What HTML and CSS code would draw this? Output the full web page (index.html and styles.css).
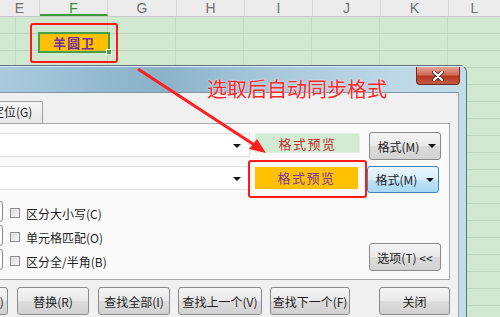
FILE: index.html
```html
<!DOCTYPE html>
<html lang="zh-CN">
<head>
    <meta charset="UTF-8">
    <title>查找和替换</title>
    <link rel="stylesheet" href="styles.css">
</head>
<body>
    <div class="screen">
        <div class="sheet">
            <div class="colhead">
                <div class="ch">E</div>
                <div class="ch active">F</div>
                <div class="ch">G</div>
                <div class="ch">H</div>
                <div class="ch">I</div>
                <div class="ch">J</div>
                <div class="ch">K</div>
                <div class="ch">L</div>
            </div>
            <div class="grid">
                <div class="row"></div>
                <div class="row">
                    <div class="cell"></div>
                    <div class="cell selected">羊圆卫<span class="handle"></span></div>
                </div>
            </div>
        </div>

        <!-- 查找和替换对话框 -->
        <div class="dialog">
            <div class="titlebar">
                <div class="close">
                    <svg width="14" height="10" viewBox="0 0 14 10">
                        <path d="M3 1 L11 9 M11 1 L3 9" stroke="#4a3a36" stroke-width="4" stroke-linecap="round"/>
                        <path d="M3 1 L11 9 M11 1 L3 9" stroke="#fff" stroke-width="2" stroke-linecap="round"/>
                    </svg>
                </div>
            </div>
            <div class="dbody">
                <div class="tabs">
                    <div class="tab">定位(G)</div>
                </div>
                <div class="panel">
                    <div class="frow">
                        <div class="combo"><span class="caret"></span></div>
                        <div class="preview plain">格式预览</div>
                        <div class="btn fmt">格式(M)<span class="caret"></span></div>
                    </div>
                    <div class="frow">
                        <div class="combo"><span class="caret"></span></div>
                        <div class="preview filled">格式预览</div>
                        <div class="btn fmt focus">格式(M)<span class="caret"></span></div>
                    </div>
                    <div class="opts">
                        <div class="selects">
                            <div class="edge"></div>
                            <div class="edge"></div>
                            <div class="edge"></div>
                        </div>
                        <div class="checks">
                            <label class="chk"><span class="box"></span>区分大小写(C)</label>
                            <label class="chk"><span class="box"></span>单元格匹配(O)</label>
                            <label class="chk"><span class="box"></span>区分全/半角(B)</label>
                        </div>
                        <div class="btn optbtn">选项(T) &lt;&lt;</div>
                    </div>
                </div>
                <div class="actions">
                    <div class="btn act first">全部替换(A)</div>
                    <div class="btn act">替换(R)</div>
                    <div class="btn act">查找全部(I)</div>
                    <div class="btn act wide">查找上一个(V)</div>
                    <div class="btn act mid">查找下一个(F)</div>
                    <div class="btn act close-btn">关闭</div>
                </div>
            </div>
        </div>

        <!-- 标注 -->
        <div class="mark mark-cell"></div>
        <div class="mark mark-preview"></div>
        <div class="note">选取后自动同步格式</div>
        <svg class="arrow" width="500" height="317" viewBox="0 0 500 317">
            <line x1="138" y1="69" x2="256" y2="146" stroke="#ff1f1f" stroke-width="3"/>
            <polygon points="266,153 249,149 257,139" fill="#ff1f1f"/>
        </svg>
    </div>
</body>
</html>
```

FILE: styles.css
```css
* {
    margin: 0;
    padding: 0;
    box-sizing: border-box;
}

body {
    font-family: "Noto Sans CJK SC", "Liberation Sans", sans-serif;
    background: #cfe8cf;
    overflow: hidden;
}

.screen {
    position: relative;
    width: 500px;
    height: 317px;
    overflow: hidden;
}

/* 表格 */
.sheet {
    display: flex;
    flex-direction: column;
    height: 100%;
}

.colhead {
    display: flex;
    height: 17px;
    background: #ececec;
    border-bottom: 1px solid #c8c8c8;
}

.ch {
    width: 68px;
    border-right: 1px solid #d4d4d4;
    text-align: center;
    font-family: "Liberation Sans", sans-serif;
    font-size: 14px;
    line-height: 16px;
    color: #707070;
}

.ch:first-child {
    width: 40px;
}

.ch:nth-child(3) {
    width: 69px;
}

.ch:last-child {
    width: 51px;
    border-right: none;
}

.ch.active {
    color: #3c8c3c;
    border-bottom: 2px solid #3c9a3c;
}

.grid {
    flex: 1;
    background-color: #cfe8cf;
    background-image:
        repeating-linear-gradient(to bottom, transparent 0 16px, #bcd7bc 16px 17px),
        repeating-linear-gradient(to right, transparent 0 67px, #c2dbc2 67px 68px);
    background-position: 0 0, 40px 0;
}

.row {
    display: flex;
    height: 17px;
}

.cell {
    width: 40px;
}

.cell.selected {
    position: relative;
    width: 68px;
    height: 17px;
    background: #ffc000;
    box-shadow: 0 0 0 2px #47a047;
    color: #7030a0;
    font-size: 13px;
    font-weight: bold;
    line-height: 17px;
    text-align: center;
    letter-spacing: 1px;
}

.handle {
    position: absolute;
    right: -4px;
    bottom: -4px;
    width: 6px;
    height: 6px;
    background: #47a047;
    border: 1px solid #fff;
}

/* 对话框 */
.dialog {
    position: absolute;
    left: -40px;
    top: 65px;
    width: 507px;
    height: 270px;
    display: flex;
    flex-direction: column;
    border-top: 1px solid #5e7280;
    border-right: 1px solid #5e7280;
    border-radius: 0 7px 0 0;
    background: linear-gradient(to right, #b4d2e3, #92b8ce 30%, #8bb2c9 40%, #a6c7da 60%, #bcd7e5 85%, #c4dce8);
}

.titlebar {
    height: 26px;
    display: flex;
    justify-content: flex-end;
    padding-right: 6px;
    border-top: 1px solid #dbe9f1;
}

.close {
    width: 44px;
    height: 18px;
    display: flex;
    align-items: center;
    justify-content: center;
    border: 1px solid #6b2e24;
    border-top: none;
    border-radius: 0 0 4px 4px;
    background: linear-gradient(to bottom, #e6a697, #d06a55 45%, #b8371f 55%, #c65a42);
}

.dbody {
    flex: 1;
    margin-right: 7px;
    background: #f0f0f0;
    border-top: 1px solid #7d97a8;
    border-right: 1px solid #8fa9b9;
}

.tabs {
    display: flex;
    padding-top: 8px;
    padding-left: 21px;
}

.tab {
    width: 62px;
    height: 22px;
    padding-left: 10px;
    border: 1px solid #a0a0a0;
    border-bottom: none;
    border-radius: 2px 2px 0 0;
    background: linear-gradient(to bottom, #f6f6f6, #e6e6e6);
    font-size: 12px;
    line-height: 20px;
    color: #1e1e1e;
}

.panel {
    margin-left: 10px;
    margin-right: 8px;
    padding: 9px 8px 6px 9px;
    background: #fafafa;
    border: 1px solid #a8a8a8;
}

.frow {
    display: flex;
    align-items: flex-start;
    height: 33px;
}

.frow + .frow {
    height: 28px;
}

.combo {
    position: relative;
    width: 270px;
    height: 24px;
    background: #fff;
    border: 1px solid #e0e0e0;
}

.caret {
    display: inline-block;
    width: 0;
    height: 0;
    border-left: 4px solid transparent;
    border-right: 4px solid transparent;
    border-top: 4px solid #111;
}

.combo .caret {
    position: absolute;
    right: 8px;
    top: 10px;
}

.preview {
    margin-left: 5px;
    width: 105px;
    height: 20px;
    font-size: 13px;
    line-height: 19px;
    text-align: center;
    letter-spacing: 1.5px;
}

.preview.plain {
    background: #d3ead3;
    border: 1px solid #e2efe2;
    color: #c0302b;
}

.preview.filled {
    margin-top: 1px;
    width: 103px;
    height: 22px;
    line-height: 21px;
    background: #ffc000;
    color: #7a3aa0;
}

.btn {
    display: flex;
    align-items: center;
    justify-content: center;
    height: 28px;
    border: 1px solid #8a8a8a;
    border-radius: 3px;
    background: linear-gradient(to bottom, #f4f4f4, #e9e9e9 50%, #dcdcdc 51%, #d2d2d2);
    font-size: 12px;
    color: #1e1e1e;
}

.fmt {
    width: 72px;
    margin-left: 9px;
    margin-top: -1px;
    gap: 9px;
    padding-left: 4px;
}

.fmt.focus {
    margin-top: 0;
    height: 27px;
    border-color: #3c86bd;
    background: linear-gradient(to bottom, #e8f5fc, #d9eefa 50%, #bee3f7 51%, #a7d8f3);
}

.opts {
    display: flex;
    margin-top: 7px;
}

.selects {
    display: flex;
    flex-direction: column;
    gap: 3px;
    width: 23px;
}

.edge {
    height: 21px;
    background: #fff;
    border: 1px solid #8a8a8a;
    border-radius: 0 3px 3px 0;
}

.checks {
    display: flex;
    flex-direction: column;
    margin-left: 7px;
}

.chk {
    display: flex;
    align-items: center;
    height: 24px;
    gap: 6px;
    font-size: 12px;
    color: #1e1e1e;
}

.box {
    width: 10px;
    height: 10px;
    border: 1px solid #8e8f8f;
    background: linear-gradient(135deg, #dcdcdc, #f6f6f6);
}

.optbtn {
    width: 72px;
    margin-left: auto;
    align-self: flex-end;
    margin-bottom: 2px;
    gap: 8px;
}

.actions {
    display: flex;
    gap: 9px;
    margin-top: 7px;
}

.act {
    width: 72px;
    flex-shrink: 0;
}

.act.first {
    margin-left: -24px;
}

.act.wide {
    width: 84px;
    margin-left: -1px;
}

.act.mid {
    width: 80px;
    margin-left: -1px;
}

.act.close-btn {
    width: 71px;
    margin-left: 20px;
}

/* 标注 */
.mark {
    position: absolute;
    border: 2px solid #ff1a1a;
    border-radius: 3px;
}

.mark-cell {
    left: 30px;
    top: 23px;
    width: 88px;
    height: 40px;
}

.mark-preview {
    left: 248px;
    top: 160px;
    width: 119px;
    height: 38px;
}

.note {
    position: absolute;
    left: 207px;
    top: 77px;
    font-size: 20px;
    line-height: 24px;
    color: #ff2626;
    text-shadow: 0 0 2px #fff;
}

.arrow {
    position: absolute;
    left: 0;
    top: 0;
}
```
